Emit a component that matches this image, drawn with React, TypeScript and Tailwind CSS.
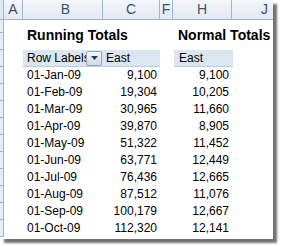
import React from "react";

const rows: [string, string, string][] = [
  ["01-Jan-09", "9,100", "9,100"],
  ["01-Feb-09", "19,304", "10,205"],
  ["01-Mar-09", "30,965", "11,660"],
  ["01-Apr-09", "39,870", "8,905"],
  ["01-May-09", "51,322", "11,452"],
  ["01-Jun-09", "63,771", "12,449"],
  ["01-Jul-09", "76,436", "12,665"],
  ["01-Aug-09", "87,512", "11,076"],
  ["01-Sep-09", "100,179", "12,667"],
  ["01-Oct-09", "112,320", "12,141"],
];

function Strip({ h }: { h: string }) {
  return <div className={`w-[4px] shrink-0 bg-[#e4ecf7] border-r border-b border-[#9eb6ce] ${h}`} />;
}

export default function App() {
  return (
    <div className="w-[281px] h-[246px] bg-white" style={{ fontFamily: '"Liberation Sans", Arial, sans-serif' }}>
      <div className="w-[273px] h-[239px] bg-white overflow-hidden shadow-[4px_4px_2px_0px_rgba(0,0,0,0.55)] text-[12px] text-black">
        {/* column headers */}
        <div className="flex h-[20px] bg-gradient-to-b from-[#f4f7fb] to-[#e2e9f2] border-b border-[#9eb6ce] text-[#3e4f66] text-[14px] leading-[19px]">
          <div className="w-[4px] shrink-0 bg-[#dfe7f2] border-r border-[#9eb6ce]" />
          <div className="w-[19px] shrink-0 border-r border-[#9eb6ce] text-center">A</div>
          <div className="w-[80px] shrink-0 border-r border-[#9eb6ce] text-center pl-[6px]">B</div>
          <div className="w-[57px] shrink-0 border-r border-[#9eb6ce] text-center">C</div>
          <div className="w-[13px] shrink-0 border-r border-[#9eb6ce] text-center">F</div>
          <div className="w-[59px] shrink-0 border-r border-[#9eb6ce] text-center">H</div>
          <div className="flex-1 text-right pr-[5px]">J</div>
        </div>
        {/* title row */}
        <div className="flex h-[30px]">
          <div className="w-[4px] shrink-0 flex flex-col">
            <Strip h="h-[13px]" />
            <Strip h="h-[17px]" />
          </div>
          <div className="w-[19px] shrink-0" />
          <div className="w-[137px] shrink-0 pl-[4px] pt-[6px] text-[14px] font-bold leading-[18px] whitespace-nowrap">Running Totals</div>
          <div className="w-[13px] shrink-0" />
          <div className="flex-1 pl-[5px] pt-[6px] text-[14px] font-bold leading-[18px] whitespace-nowrap">Normal Totals</div>
        </div>
        {/* pivot header row */}
        <div className="flex h-[17px] leading-[17px]">
          <Strip h="h-[17px]" />
          <div className="w-[19px] shrink-0" />
          <div className="w-[137px] shrink-0 flex bg-[#dce6f1] border-b border-[#b8cce4]">
            <div className="w-[80px] shrink-0 flex items-center pl-[4px] pr-[1px]">
              <span className="flex-1 overflow-hidden whitespace-nowrap">Row Labels</span>
              <div className="w-[16px] h-[15px] shrink-0 rounded-[2px] border border-[#8ea3bf] bg-gradient-to-b from-[#f3f6fb] to-[#cfd9e8] flex items-center justify-center">
                <svg width="7" height="4" viewBox="0 0 7 4"><path d="M0 0 H7 L3.5 4 Z" fill="#1f3864" /></svg>
              </div>
            </div>
            <div className="flex-1 pl-[3px]">East</div>
          </div>
          <div className="w-[13px] shrink-0" />
          <div className="w-[59px] shrink-0 bg-[#dce6f1] border-b border-[#b8cce4] pl-[5px] ml-[1px]">East</div>
        </div>
        {/* data rows */}
        {rows.map(([d, r, n]) => (
          <div key={d} className="flex h-[17px] leading-[17px]">
            <Strip h="h-[17px]" />
            <div className="w-[19px] shrink-0" />
            <div className="w-[80px] shrink-0 pl-[4px] whitespace-nowrap">{d}</div>
            <div className="w-[57px] shrink-0 pr-[3px] text-right">{r}</div>
            <div className="w-[13px] shrink-0" />
            <div className="w-[60px] shrink-0 pr-[4px] text-right">{n}</div>
          </div>
        ))}
      </div>
    </div>
  );
}
